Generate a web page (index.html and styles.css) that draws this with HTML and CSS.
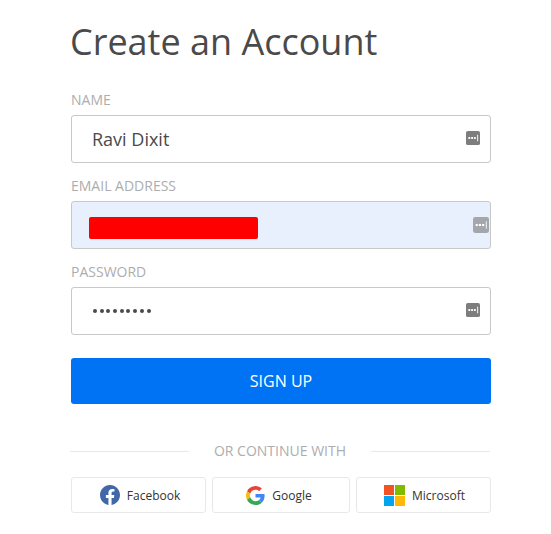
FILE: index.html
```html
<!DOCTYPE html>
<html lang="en">
<head>
<meta charset="utf-8">
<title>Create an Account</title>
<link rel="stylesheet" href="styles.css">
</head>
<body>
<main class="form">
  <h1 class="title">Create an Account</h1>
  <div class="field">
    <div class="label">NAME</div>
    <div class="input">
      <span class="value">Ravi Dixit</span>
      <svg class="key" width="14" height="14" viewBox="0 0 15 15"><rect width="15" height="15" rx="2" fill="#7d7d7d"/><rect x="2.5" y="6.5" width="2" height="2" fill="#fff"/><rect x="5.5" y="6.5" width="2" height="2" fill="#fff"/><rect x="8.5" y="6.5" width="2" height="2" fill="#fff"/><rect x="12" y="4" width="1" height="7" fill="#fff"/></svg>
    </div>
  </div>
  <div class="field">
    <div class="label">EMAIL ADDRESS</div>
    <div class="input filled">
      <span class="redact"></span>
      <svg class="key shifted" width="16" height="16" viewBox="0 0 15 15"><rect width="15" height="15" rx="2" fill="#a3a6ab"/><rect x="2.5" y="6.5" width="2" height="2" fill="#fff"/><rect x="5.5" y="6.5" width="2" height="2" fill="#fff"/><rect x="8.5" y="6.5" width="2" height="2" fill="#fff"/><rect x="12" y="4" width="1" height="7" fill="#e8effb"/></svg>
    </div>
  </div>
  <div class="field">
    <div class="label">PASSWORD</div>
    <div class="input">
      <span class="dots"><i></i><i></i><i></i><i></i><i></i><i></i><i></i><i></i><i></i></span>
      <svg class="key" width="14" height="14" viewBox="0 0 15 15"><rect width="15" height="15" rx="2" fill="#7d7d7d"/><rect x="2.5" y="6.5" width="2" height="2" fill="#fff"/><rect x="5.5" y="6.5" width="2" height="2" fill="#fff"/><rect x="8.5" y="6.5" width="2" height="2" fill="#fff"/><rect x="12" y="4" width="1" height="7" fill="#fff"/></svg>
    </div>
  </div>
  <button class="submit">SIGN UP</button>
  <div class="divider"><span class="rule"></span><span class="divider-text">OR CONTINUE WITH</span><span class="rule"></span></div>
  <div class="socials">
    <div class="social facebook">
      <svg width="20" height="20" viewBox="0 0 24 24"><path fill="#4267a8" d="M24 12.07C24 5.4 18.63 0 12 0S0 5.4 0 12.07c0 6.03 4.39 11.02 10.13 11.93v-8.44H7.08v-3.49h3.05V9.41c0-3.02 1.79-4.69 4.53-4.69 1.31 0 2.69.24 2.69.24v2.97h-1.52c-1.49 0-1.96.93-1.96 1.89v2.25h3.33l-.53 3.49h-2.8V24C19.61 23.09 24 18.1 24 12.07z"/></svg>
      <span>Facebook</span>
    </div>
    <div class="social google">
      <svg width="19" height="19" viewBox="0 0 48 48"><path fill="#EA4335" d="M24 9.5c3.54 0 6.71 1.22 9.21 3.6l6.85-6.85C35.9 2.38 30.47 0 24 0 14.62 0 6.51 5.38 2.56 13.22l7.98 6.19C12.43 13.72 17.74 9.5 24 9.5z"/><path fill="#4285F4" d="M46.98 24.55c0-1.57-.15-3.09-.38-4.55H24v9.02h12.94c-.58 2.96-2.26 5.48-4.78 7.18l7.73 6c4.51-4.18 7.09-10.36 7.09-17.65z"/><path fill="#FBBC05" d="M10.53 28.59c-.48-1.45-.76-2.99-.76-4.59s.27-3.14.76-4.59l-7.98-6.19C.92 16.46 0 20.12 0 24c0 3.88.92 7.54 2.56 10.78l7.97-6.19z"/><path fill="#34A853" d="M24 48c6.48 0 11.93-2.13 15.89-5.81l-7.73-6c-2.15 1.45-4.92 2.3-8.16 2.3-6.26 0-11.57-4.22-13.47-9.91l-7.98 6.19C6.51 42.62 14.62 48 24 48z"/></svg>
      <span>Google</span>
    </div>
    <div class="social microsoft">
      <svg width="21" height="21" viewBox="0 0 21 21"><rect width="10" height="10" fill="#f25325"/><rect x="11" width="10" height="10" fill="#80ba01"/><rect y="11" width="10" height="10" fill="#02a4ef"/><rect x="11" y="11" width="10" height="10" fill="#ffb902"/></svg>
      <span>Microsoft</span>
    </div>
  </div>
</main>
</body>
</html>
```
FILE: styles.css
```css
* { box-sizing: border-box; }
html, body { margin: 0; background: #fff; }
body { font-family: "Open Sans", sans-serif; color: #4a4a4a; }
.form { width: 420px; margin-left: 71px; padding-top: 17px; }
.title { margin: 0 0 23px -1px; font-size: 36px; font-weight: 400; line-height: 50px; color: #4a4a4a; }
.field { margin-bottom: 13px; }
.label { font-size: 14px; line-height: 20px; height: 20px; margin-bottom: 5px; color: #adadad; }
.input { height: 48px; border: 1px solid #c8c8c8; border-radius: 3px; background: #fff; display: flex; align-items: center; justify-content: space-between; padding: 0 10px 0 20px; }
.input.filled { background: #e8f0fe; padding-left: 17px; padding-right: 1px; }
.value { font-size: 18px; color: #4a4a4a; }
.redact { width: 169px; height: 22px; margin-top: 6px; background: #f00; border-radius: 2px; }
.key { display: block; margin-top: -3px; }
.key.shifted { margin-top: 0; }
.dots { display: flex; gap: 2.7px; margin-left: 1px; }
.dots i { width: 4px; height: 4px; border-radius: 50%; background: #4a4a4a; }
.submit { display: block; width: 100%; height: 46px; margin-top: 23px; border: 0; border-radius: 3px; background: #0073f5; color: #fff; font: 400 16px "Open Sans", sans-serif; }
.divider { display: flex; align-items: center; justify-content: space-between; margin: 37px 1px 0 -1px; height: 20px; }
.rule { width: 119px; height: 1px; background: #e8e8e8; }
.divider-text { font-size: 14px; color: #adadad; margin-bottom: 2px; }
.socials { display: flex; gap: 6px; margin-top: 16px; }
.social { flex: 0 0 135px; height: 36px; border: 1px solid #e8e8e8; border-radius: 3px; display: flex; align-items: center; justify-content: center; gap: 7px; font-size: 12px; color: #333; }
.social.facebook { padding-left: 3px; }
.social.google { flex-basis: 138px; padding-right: 4px; }
.social.microsoft { padding-left: 2px; }
```
